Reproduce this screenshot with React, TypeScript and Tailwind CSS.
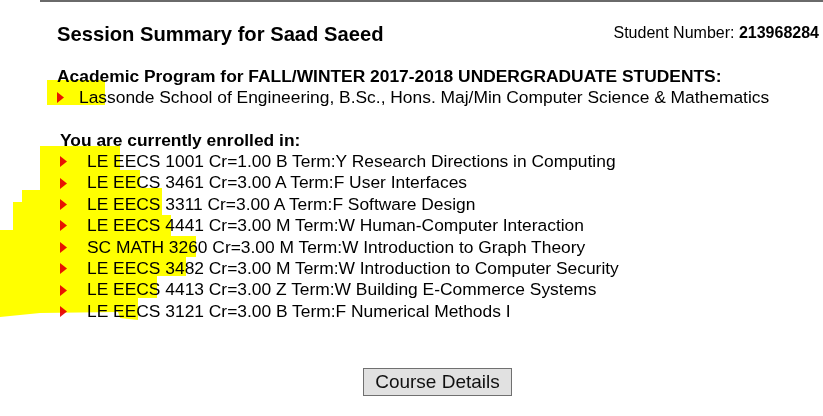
import React from 'react';

const courses = [
  'LE EECS 1001 Cr=1.00 B Term:Y Research Directions in Computing',
  'LE EECS 3461 Cr=3.00 A Term:F User Interfaces',
  'LE EECS 3311 Cr=3.00 A Term:F Software Design',
  'LE EECS 4441 Cr=3.00 M Term:W Human-Computer Interaction',
  'SC MATH 3260 Cr=3.00 M Term:W Introduction to Graph Theory',
  'LE EECS 3482 Cr=3.00 M Term:W Introduction to Computer Security',
  'LE EECS 4413 Cr=3.00 Z Term:W Building E-Commerce Systems',
  'LE EECS 3121 Cr=3.00 B Term:F Numerical Methods I',
];

function Arrow() {
  return (
    <svg width="7" height="11" viewBox="0 0 7 11" className="shrink-0">
      <polygon points="0,0 7,5.5 0,11" fill="#e8141b" />
    </svg>
  );
}

export default function App() {
  return (
    <div
      className="relative w-[823px] h-[416px] bg-white text-black overflow-hidden"
      style={{ fontFamily: '"Liberation Sans", Arial, sans-serif' }}
    >
      {/* top rule */}
      <div className="ml-[40px] h-[2px] bg-[#6a6a6a]" />

      <div className="pl-[57px] pr-[4px]">
        {/* Header */}
        <div className="flex items-start justify-between pt-[20px]">
          <h1 className="text-[20.2px] leading-[24px] font-bold">Session Summary for Saad Saeed</h1>
          <div className="text-[16px] leading-[21px]">
            Student Number: <span className="font-bold">213968284</span>
          </div>
        </div>

        {/* Program */}
        <div className="mt-[19px] text-[17.4px] leading-[22px] font-bold">
          Academic Program for FALL/WINTER 2017-2018 UNDERGRADUATE STUDENTS:
        </div>
        <div className="flex items-center text-[17.4px] leading-[21px]">
          <Arrow />
          <span className="ml-[15px]">
            Lassonde School of Engineering, B.Sc., Hons. Maj/Min Computer Science &amp; Mathematics
          </span>
        </div>

        {/* Enrolled */}
        <div className="mt-[22px] pl-[3px] text-[17.4px] leading-[21px] font-bold">
          You are currently enrolled in:
        </div>
        <ul className="pl-[3px]">
          {courses.map((c) => (
            <li key={c} className="flex items-center text-[17.4px] leading-[21.4px]">
              <Arrow />
              <span className="ml-[20px]">{c}</span>
            </li>
          ))}
        </ul>

        <div className="mt-[46px] pl-[306px]">
          <button className="w-[149px] h-[28px] border border-[#707070] bg-[#e1e1e1] text-[19px] leading-[26px] text-[#111]">
            Course Details
          </button>
        </div>
      </div>

      {/* highlighter marks */}
      <svg
        className="absolute left-0 top-0 mix-blend-multiply pointer-events-none"
        width="823"
        height="416"
      >
        <rect x="47" y="80" width="58" height="25" fill="#ffff00" />
        <polygon
          fill="#ffff00"
          points="40,146 120,146 120,170 140,170 140,188 162,188 162,215 171,215 171,236 196,236 196,257 186,257 186,276 157,276 157,298 138,298 138,320 120,318 118,312 40,313 0,317 0,230 13,230 13,202 22,202 22,190 40,190"
        />
      </svg>
    </div>
  );
}
